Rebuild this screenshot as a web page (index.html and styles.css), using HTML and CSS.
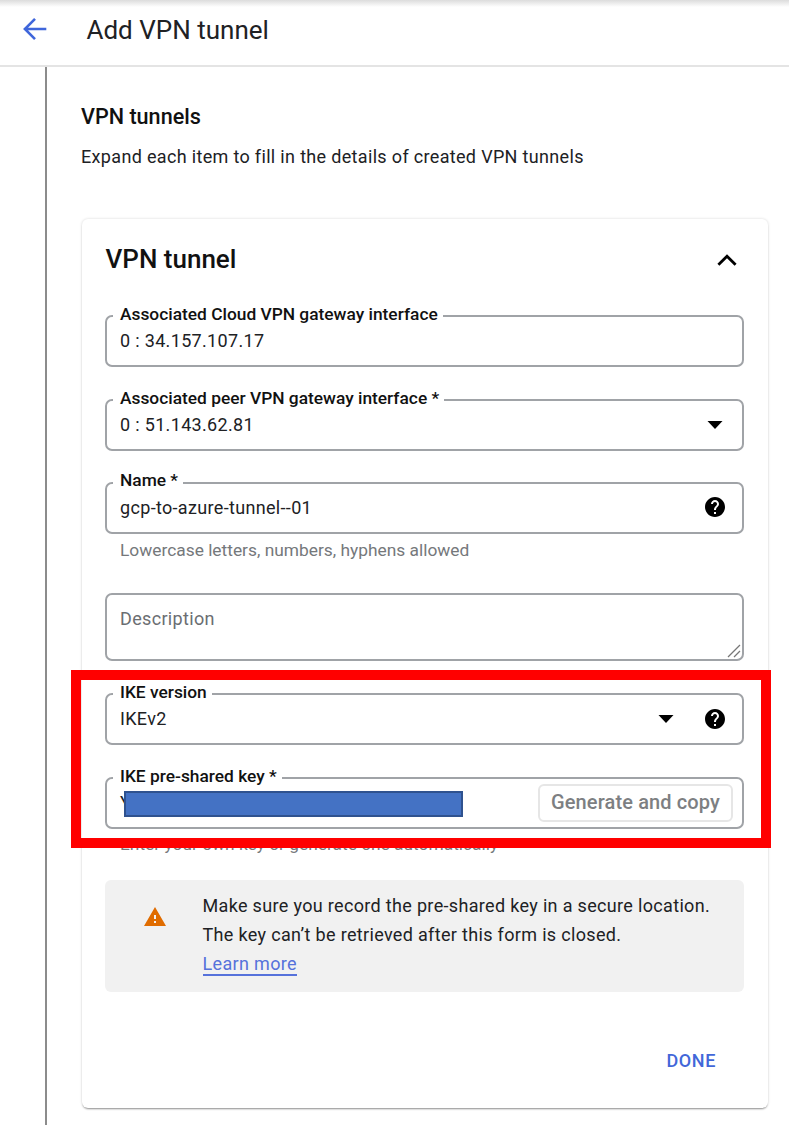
FILE: index.html
```html
<!DOCTYPE html>
<html lang="en">
  <head>
    <meta charset="UTF-8" />
    <meta name="viewport" content="width=device-width, initial-scale=1.0" />
    <title>Add VPN tunnel</title>
    <link rel="stylesheet" href="styles.css">
  </head>
  <body>
    <header class="topbar">
      <svg class="back" width="24" height="24" viewBox="0 0 24 24">
        <path d="M12 1.8 1.9 12 12 22.2M1.9 12h21.4" fill="none" stroke="#3f66db" stroke-width="2.6" />
      </svg>
      <h1>Add VPN tunnel</h1>
    </header>
    <main class="content">
      <h2>VPN tunnels</h2>
      <p class="intro">Expand each item to fill in the details of created VPN tunnels</p>

      <section class="card">
        <div class="card-header">
          <h3>VPN tunnel</h3>
          <svg width="20" height="14" viewBox="0 0 20 14">
            <path d="M1.4 11.8 10 3.2l8.6 8.6" fill="none" stroke="#000" stroke-width="2.8" />
          </svg>
        </div>

        <div class="field">
          <span class="label">Associated Cloud VPN gateway interface</span>
          <span class="value">0 : 34.157.107.17</span>
        </div>

        <div class="field">
          <span class="label">Associated peer VPN gateway interface *</span>
          <span class="value">0 : 51.143.62.81</span>
          <svg class="arrow" width="16" height="8" viewBox="0 0 16 8"><path d="M.5 0h15L8 8z" /></svg>
        </div>

        <div class="field name">
          <span class="label">Name *</span>
          <span class="value">gcp-to-azure-tunnel--01</span>
          <svg class="help" width="22" height="22" viewBox="1 1 22 22">
            <path d="M12 2C6.48 2 2 6.48 2 12s4.48 10 10 10 10-4.48 10-10S17.52 2 12 2zm1 17h-2v-2h2v2zm2.07-7.75l-.9.92C13.45 12.9 13 13.5 13 15h-2v-.5c0-1.1.45-2.1 1.17-2.83l1.24-1.26c.37-.36.59-.86.59-1.41 0-1.1-.9-2-2-2s-2 .9-2 2H8c0-2.21 1.79-4 4-4s4 1.79 4 4c0 .88-.36 1.68-.93 2.25z" />
          </svg>
        </div>
        <p class="hint">Lowercase letters, numbers, hyphens allowed</p>

        <div class="field description">
          <span class="value placeholder">Description</span>
          <svg class="grip" width="14" height="14" viewBox="0 0 14 14">
            <path d="M1 13 13 1M7 13l6-6" fill="none" stroke="#777" stroke-width="1.3" />
          </svg>
        </div>

        <div class="ike">
          <div class="field version">
            <span class="label">IKE version</span>
            <span class="value">IKEv2</span>
            <svg class="arrow" width="16" height="8" viewBox="0 0 16 8"><path d="M.5 0h15L8 8z" /></svg>
            <svg class="help" width="22" height="22" viewBox="1 1 22 22">
              <path d="M12 2C6.48 2 2 6.48 2 12s4.48 10 10 10 10-4.48 10-10S17.52 2 12 2zm1 17h-2v-2h2v2zm2.07-7.75l-.9.92C13.45 12.9 13 13.5 13 15h-2v-.5c0-1.1.45-2.1 1.17-2.83l1.24-1.26c.37-.36.59-.86.59-1.41 0-1.1-.9-2-2-2s-2 .9-2 2H8c0-2.21 1.79-4 4-4s4 1.79 4 4c0 .88-.36 1.68-.93 2.25z" />
            </svg>
          </div>
          <div class="field key">
            <span class="label">IKE pre-shared key *</span>
            <span class="value">Y</span>
            <span class="redacted"></span>
            <button class="generate" type="button">Generate and copy</button>
          </div>
          <p class="hint">Enter your own key or generate one automatically</p>
          <div class="highlight"></div>
        </div>

        <div class="notice">
          <svg width="22" height="19" viewBox="1 2 22 19">
            <path d="M1 21h22L12 2 1 21zm12-3h-2v-2h2v2zm0-4h-2v-4h2v4z" fill="#e06c00" />
          </svg>
          <p>
            Make sure you record the pre-shared key in a secure location.<br />
            The key can’t be retrieved after this form is closed.<br />
            <a href="#">Learn more</a>
          </p>
        </div>

        <div class="actions">
          <button class="done" type="button">DONE</button>
        </div>
      </section>
    </main>
  </body>
</html>
```
FILE: styles.css
```css
* {
  box-sizing: border-box;
}
body {
  margin: 0;
  height: 1125px;
  overflow: hidden;
  display: flex;
  flex-direction: column;
  background-color: #fff;
  color: #202124;
  font-family: Roboto, sans-serif;
  font-size: 18px;
  letter-spacing: 0.33px;
}
h1,
h2,
h3,
p {
  margin: 0;
}
.topbar {
  height: 67px;
  flex: none;
  display: flex;
  align-items: center;
  gap: 39.5px;
  padding: 0 23px 7px;
  border-bottom: 2px solid #e4e4e4;
  background: linear-gradient(#dcdcdc, #fff 7px);
}
h1 {
  padding-top: 2px;
  font-size: 26px;
  font-weight: 400;
  letter-spacing: 0;
}
.content {
  flex: 1;
  margin-left: 45px;
  padding: 36px 21px 0 34px;
  border-left: 2px solid #8c8c8c;
}
h2 {
  font-size: 21.6px;
  font-weight: 500;
  line-height: 28px;
  letter-spacing: 0;
  color: #111;
}
.intro {
  margin-top: 13px;
  line-height: 26px;
}
.card {
  height: 889px;
  margin: 49px 0 0 1px;
  padding: 20px 24px 0 23px;
  border-radius: 6px;
  box-shadow: 0 2px 2px -1px rgba(0, 0, 0, 0.4), 0 0 3px rgba(0, 0, 0, 0.16);
}
.card-header {
  display: flex;
  align-items: center;
  justify-content: space-between;
  height: 42px;
  margin-bottom: 34px;
  padding-right: 7px;
}
h3 {
  padding: 0 0 2px 0.5px;
  font-size: 26px;
  font-weight: 500;
  letter-spacing: 0;
  color: #111;
}
.field {
  position: relative;
  display: flex;
  align-items: center;
  height: 52px;
  margin-bottom: 32px;
  padding: 0 15px 0 13px;
  border: 2px solid #a0a3a7;
  border-radius: 7px;
}
.label {
  position: absolute;
  top: -14px;
  left: 6px;
  padding: 0 5px 0 7px;
  background-color: #fff;
  color: #111;
  font-size: 17.35px;
  font-weight: 500;
  line-height: 22px;
  letter-spacing: 0;
}
.value {
  flex: 1;
  padding-bottom: 2px;
}
.arrow {
  margin-right: 4px;
}
.help {
  margin: 0 1px 2px 0;
}
.name {
  margin: -1px 0 5px;
}
.name .label {
  top: -15px;
}
.hint {
  padding-left: 15px;
  font-size: 17.35px;
  line-height: 22px;
  letter-spacing: 0;
  color: #75787b;
}
.description {
  height: 68px;
  margin-top: 32px;
}
.placeholder {
  padding-bottom: 18px;
  color: #6b6e72;
}
.grip {
  position: absolute;
  right: 1px;
  bottom: 1px;
}
.ike {
  position: relative;
}
.version .arrow {
  margin-right: 30px;
}
.version .help {
  margin-bottom: 0;
}
.key {
  margin-bottom: 4px;
}
.redacted {
  position: absolute;
  top: 12px;
  left: 17px;
  width: 339px;
  height: 26px;
  background-color: #4472c4;
  border: 2px solid #2f528f;
}
.generate {
  width: 195px;
  height: 38px;
  margin-right: -6px;
  padding: 0 0 2px;
  background-color: #fff;
  border: 2px solid #e6e6e6;
  border-radius: 6px;
  color: #7d7f82;
  font: 500 20px Roboto, sans-serif;
  letter-spacing: 0.13px;
}
.highlight {
  position: absolute;
  top: -23px;
  left: -34px;
  width: 700px;
  height: 178px;
  border: 10px solid #f00;
}
.notice {
  display: flex;
  gap: 36.5px;
  height: 112px;
  margin-top: 25px;
  padding: 12px 20px 0 39px;
  background-color: #f1f1f1;
  border-radius: 6px;
}
.notice svg {
  flex: none;
  margin-top: 15px;
}
.notice p {
  margin-top: -1px;
  line-height: 29px;
  white-space: nowrap;
}
.notice a {
  color: #5672db;
  text-decoration: none;
  border-bottom: 2px solid #5672db;
}
.actions {
  display: flex;
  justify-content: flex-end;
  margin-top: 49px;
  padding-right: 28px;
}
.done {
  padding: 0;
  border: none;
  background: none;
  color: #4267d9;
  font: 500 18px/40px Roboto, sans-serif;
  letter-spacing: 0.6px;
}
```
